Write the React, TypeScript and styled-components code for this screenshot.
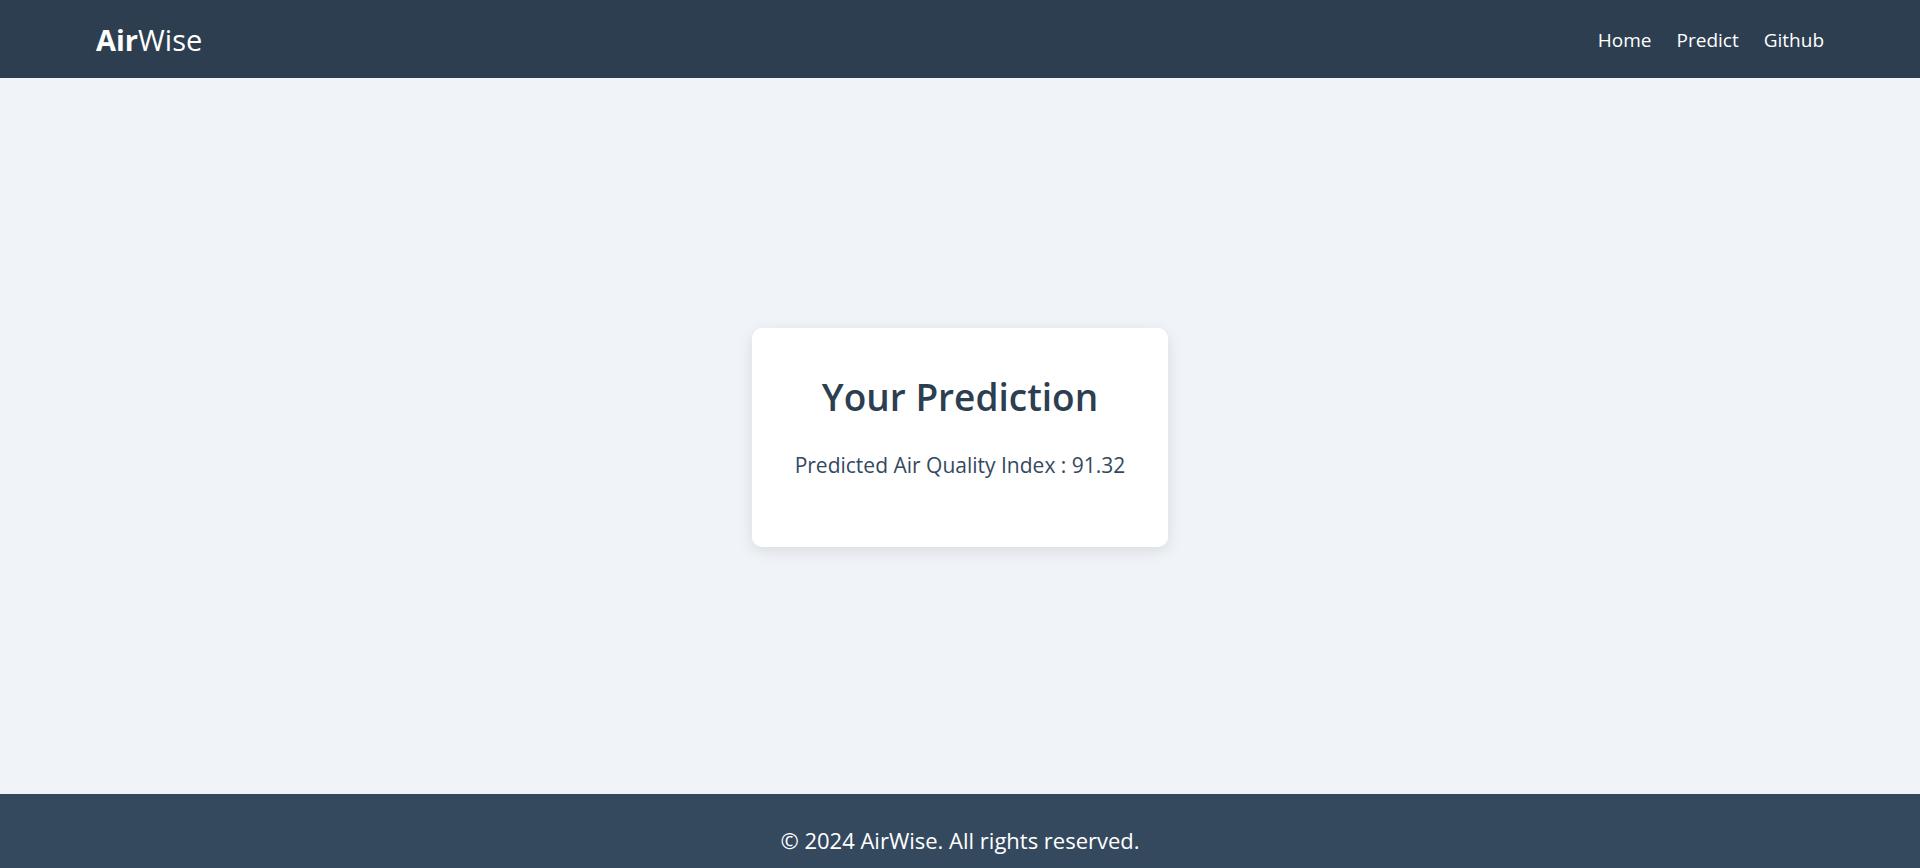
import React from "react";
import styled, { createGlobalStyle } from "styled-components";

const GlobalStyle = createGlobalStyle`
  *, *::before, *::after { box-sizing: border-box; }
  body {
    margin: 0;
    font-family: "Segoe UI", "Open Sans", "Noto Sans", sans-serif;
    background: #f0f4f8;
    color: #2c3e50;
  }
`;

const Page = styled.div`
  display: flex;
  flex-direction: column;
  min-height: 100vh;
`;

const Header = styled.header`
  display: flex;
  align-items: center;
  justify-content: space-between;
  padding: 21px 5% 20px;
  background: #2c3e50;
  color: #fff;
`;

const Logo = styled.a`
  color: #fff;
  font-size: 29px;
  line-height: 37px;
  font-weight: 400;
  text-decoration: none;
`;

const Nav = styled.nav`
  display: flex;
  gap: 25px;
`;

const NavLink = styled.a`
  color: #fff;
  font-size: 19px;
  line-height: 26px;
  text-decoration: none;
`;

const Main = styled.main`
  flex: 1;
  display: flex;
  align-items: center;
  justify-content: center;
  padding-top: 3px;
`;

const Card = styled.section`
  padding: 40px 43px 62px;
  background: #fff;
  border-radius: 10px;
  box-shadow: 0 4px 15px rgba(0, 0, 0, 0.1);
  text-align: center;
`;

const Title = styled.h1`
  margin: 0 0 20px;
  font-size: 37px;
  line-height: 57px;
  font-weight: 600;
`;

const Result = styled.p`
  margin: 0;
  font-size: 21px;
  line-height: 40px;
  color: #34495e;
`;

const Footer = styled.footer`
  padding: 30px 20px 12px;
  background: #34495e;
  color: #fff;
  font-size: 22px;
  line-height: 32px;
  text-align: center;
`;

export default function App() {
  return (
    <Page>
      <GlobalStyle />
      <Header>
        <Logo href="#"><b>Air</b>Wise</Logo>
        <Nav>
          <NavLink href="#">Home</NavLink>
          <NavLink href="#predict">Predict</NavLink>
          <NavLink href="#github">Github</NavLink>
        </Nav>
      </Header>
      <Main>
        <Card>
          <Title>Your Prediction</Title>
          <Result>Predicted Air Quality Index : 91.32</Result>
        </Card>
      </Main>
      <Footer>© 2024 AirWise. All rights reserved.</Footer>
    </Page>
  );
}
